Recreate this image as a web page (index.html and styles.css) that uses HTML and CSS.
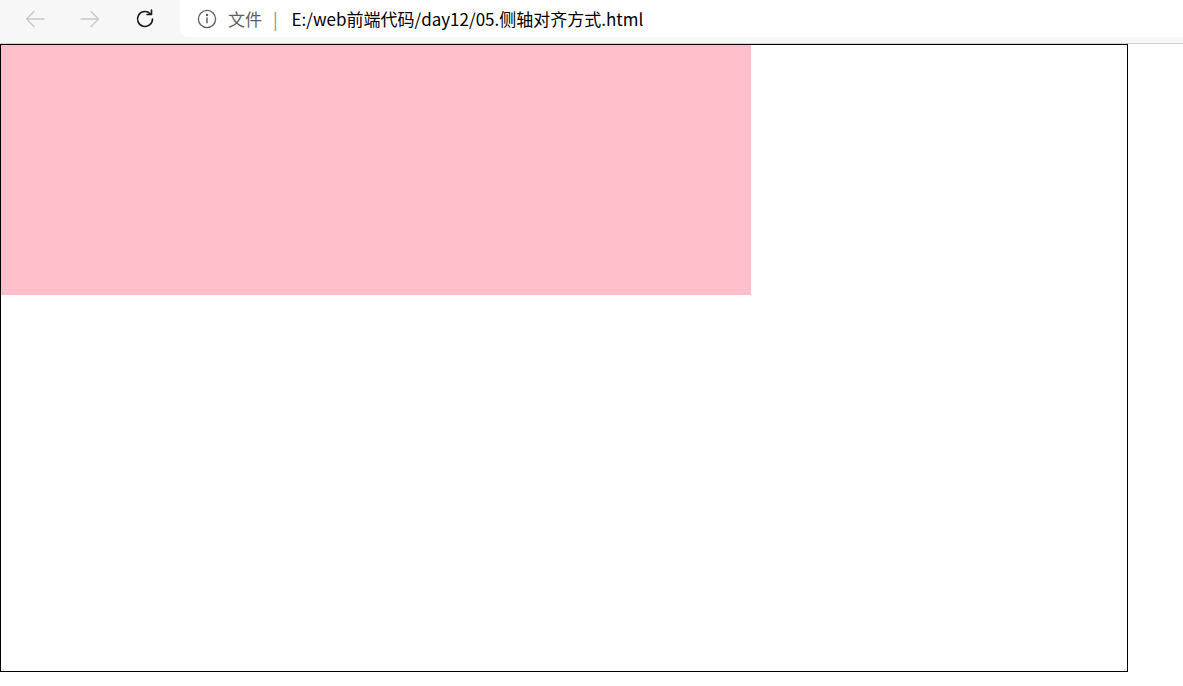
FILE: index.html
```html
<!DOCTYPE html>
<html lang="zh">
<head>
<meta charset="utf-8">
<title>05.侧轴对齐方式</title>
<link rel="stylesheet" href="styles.css">
</head>
<body>
<header class="toolbar">
  <div class="nav">
    <span class="nav-btn">
      <svg width="24" height="24" viewBox="0 0 24 24" fill="none" stroke="#c9c9c9" stroke-width="1.4" stroke-linecap="round" stroke-linejoin="round"><path d="M21 12H3.5M11 4.5L3.5 12l7.5 7.5"/></svg>
    </span>
    <span class="nav-btn">
      <svg width="24" height="24" viewBox="0 0 24 24" fill="none" stroke="#c9c9c9" stroke-width="1.4" stroke-linecap="round" stroke-linejoin="round"><path d="M3 12h17.5M13 4.5l7.5 7.5-7.5 7.5"/></svg>
    </span>
    <span class="nav-btn">
      <svg width="24" height="24" viewBox="0 0 24 24" fill="none" stroke="#1b1b1b" stroke-width="1.6" stroke-linecap="round" stroke-linejoin="round"><path d="M19.5 12a7.5 7.5 0 1 1-2.2-5.3"/><path d="M18.5 3v4.5H14"/></svg>
    </span>
  </div>
  <div class="address">
    <svg class="info" width="20" height="20" viewBox="0 0 20 20" fill="none" stroke="#5f5f5f" stroke-width="1.3"><circle cx="10" cy="10" r="8.6"/><path d="M10 8.6v5.6" stroke-width="1.5"/><circle cx="10" cy="5.9" r="0.6" fill="#5f5f5f"/></svg>
    <span class="scheme">文件</span>
    <span class="sep">|</span>
    <span class="url">E:/web前端代码/day12/05.侧轴对齐方式.html</span>
  </div>
</header>
<main class="box">
  <div class="item"></div>
</main>
</body>
</html>
```

FILE: styles.css
```css
html, body {
  margin: 0;
  padding: 0;
  background: #ffffff;
}
body {
  font-family: "Noto Sans", "Noto Sans CJK SC", sans-serif;
}
.toolbar {
  display: flex;
  height: 43px;
  background: #f7f7f7;
  border-bottom: 1px solid #d2d2d2;
  box-sizing: content-box;
}
.nav {
  display: flex;
  align-items: center;
  width: 180px;
  padding-left: 23px;
  box-sizing: border-box;
  gap: 31px;
  padding-bottom: 6px;
}
.nav-btn {
  display: flex;
  width: 24px;
  height: 24px;
}
.address {
  flex: 1;
  height: 37px;
  background: #ffffff;
  border-radius: 0 0 0 8px;
  display: flex;
  align-items: center;
  padding-left: 17px;
  font-family: "Noto Sans CJK SC", sans-serif;
  font-size: 17px;
}
.info {
  flex: none;
}
.scheme {
  color: #5f5f5f;
  margin-left: 11px;
}
.sep {
  color: #8a8a8a;
  margin-left: 11px;
  margin-right: 14px;
}
.url {
  color: #000000;
  margin-bottom: 1px;
}
.box {
  display: flex;
  align-items: flex-start;
  width: 1126px;
  height: 626px;
  border: 1px solid #000000;
}
.item {
  width: 750px;
  height: 250px;
  background: pink;
}
```
